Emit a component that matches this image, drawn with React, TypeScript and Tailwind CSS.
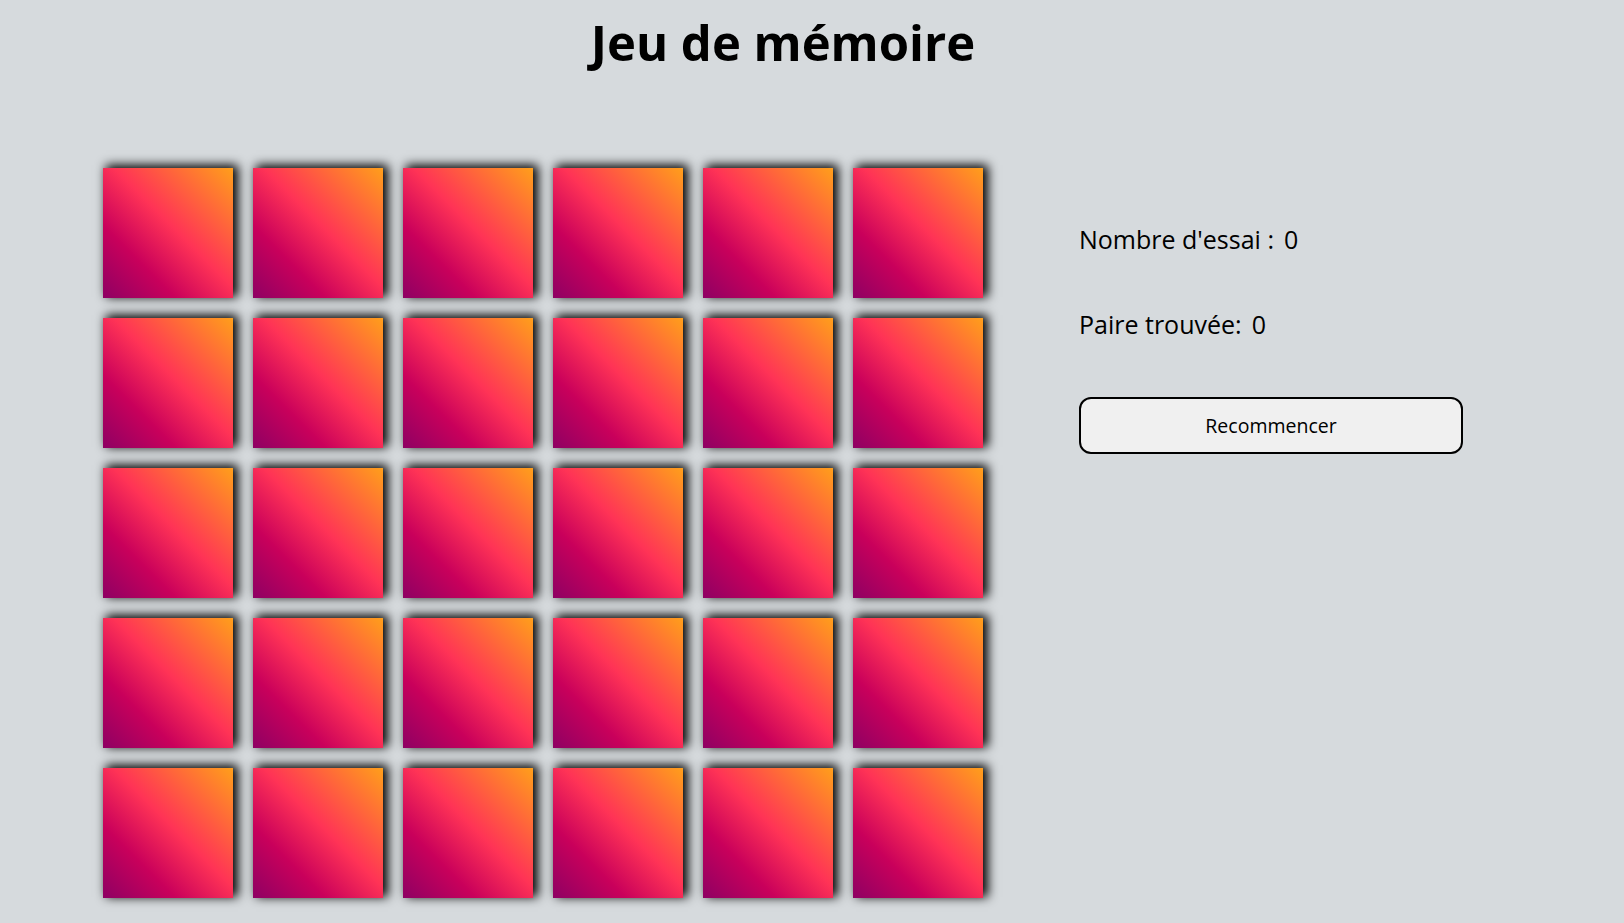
import React, { useState } from 'react';

const CARDS = Array.from({ length: 30 }, (_, i) => i);

function Card() {
  return (
    <div className="w-[130px] h-[130px] bg-[linear-gradient(45deg,#8e0063_0%,#c9005b_28%,#ff3356_54%,#ff9f1b_100%)] shadow-[4px_-2px_10px_1px_#000]" />
  );
}

export default function App() {
  const [tries, setTries] = useState(0);
  const [pairs, setPairs] = useState(0);

  return (
    <div className="min-h-screen bg-[#d6dadd] font-['Open_Sans',sans-serif] text-black">
      <div className="w-[1360px] ml-[103px]">
        <h1 className="text-center text-[49px] font-bold leading-[60px] pt-[12px]">Jeu de mémoire</h1>

        <div className="flex gap-[96px] mt-[96px]">
          <div className="grid grid-cols-6 gap-[20px] w-[880px]">
            {CARDS.map((i) => (
              <Card key={i} />
            ))}
          </div>

          <div className="flex-1 flex flex-col items-start pt-[55px]">
            <p className="text-[25px] leading-[32px]">
              Nombre d'essai :<span className="ml-[10px]">{tries}</span>
            </p>
            <p className="text-[25px] leading-[32px] mt-[53px]">
              Paire trouvée:<span className="ml-[10px]">{pairs}</span>
            </p>
            <button
              onClick={() => {
                setTries(0);
                setPairs(0);
              }}
              className="mt-[57px] w-[384px] h-[57px] bg-[#f0f0f0] border-2 border-black rounded-[12px] text-[19.5px]"
            >
              Recommencer
            </button>
          </div>
        </div>
      </div>
    </div>
  );
}
